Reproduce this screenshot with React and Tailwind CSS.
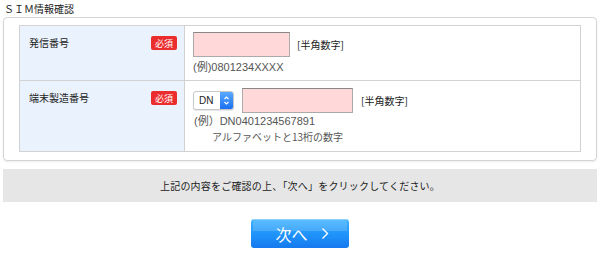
import React from 'react';

const jp = { fontFamily: '"Noto Sans CJK JP", "Noto Sans", sans-serif' };
const mixed = { fontFamily: '"Liberation Sans", "Noto Sans CJK JP", sans-serif' };

function Badge() {
    return (
        <span className="inline-flex h-[14px] w-[26px] items-center justify-center rounded-[2px] bg-[#ec2d2d] text-[9px] leading-none text-white">
            必須
        </span>
    );
}

function SelectBox() {
    return (
        <div className="flex h-[19px] w-[41px] items-center justify-between rounded-[3px] border border-[#c8c8c8] bg-white pl-[5px] shadow-[0_1px_1px_rgba(0,0,0,0.1)]">
            <span className="text-[10px] leading-none text-[#222]" style={{ fontFamily: '"Liberation Sans", sans-serif' }}>DN</span>
            <span className="flex h-[17px] w-[13px] items-center justify-center rounded-r-[2px] bg-gradient-to-b from-[#5aa9ff] to-[#1b6ff0]">
                <svg width="7" height="11" viewBox="0 0 7 11" fill="none" stroke="white" strokeWidth="1.2">
                    <path d="M1.5 4 L3.5 2 L5.5 4" />
                    <path d="M1.5 7 L3.5 9 L5.5 7" />
                </svg>
            </span>
        </div>
    );
}

export default function App() {
    return (
        <div className="w-[600px] h-[253px] bg-white text-[#333]" style={jp}>
            <div className="pl-[4px] pt-[2px] h-[17px] text-[10px] leading-[14px] text-[#222]">ＳＩＭ情報確認</div>

            <div className="mx-[3px] rounded-[4px] border border-[#d4d4d4] shadow-[0_1px_2px_rgba(0,0,0,0.08)] px-[15px] pt-[7px] pb-[8px]">
                <div className="border border-[#d2d2d2]">
                    <div className="flex h-[55px] border-b border-[#d2d2d2]">
                        <div className="flex w-[165px] justify-between border-r border-[#d2d2d2] bg-[#eaf2fd] pl-[9px] pr-[7px] pt-[10px]">
                            <span className="text-[10px] leading-[14px] text-[#222]">発信番号</span>
                            <Badge />
                        </div>
                        <div className="flex-1 pl-[8px] pt-[6px]">
                            <div className="flex items-center gap-[7px]">
                                <div className="h-[25px] w-[97px] border border-[#aaa] border-t-[#888] bg-[#ffd9d9]" />
                                <span className="text-[10px] text-[#222]">[半角数字]</span>
                            </div>
                            <div className="mt-[3px] text-[11px] leading-[14px] text-[#555]" style={mixed}>(例)0801234XXXX</div>
                        </div>
                    </div>
                    <div className="flex h-[70px]">
                        <div className="flex w-[165px] justify-between border-r border-[#d2d2d2] bg-[#eaf2fd] pl-[9px] pr-[7px] pt-[10px]">
                            <span className="text-[10px] leading-[14px] text-[#222]">端末製造番号</span>
                            <Badge />
                        </div>
                        <div className="flex-1 pl-[8px] pt-[7px]">
                            <div className="flex items-center">
                                <SelectBox />
                                <div className="ml-[8px] h-[25px] w-[111px] border border-[#aaa] border-t-[#888] bg-[#ffd9d9]" />
                                <span className="ml-[8px] text-[10px] text-[#222]">[半角数字]</span>
                            </div>
                            <div className="mt-[1px] pl-[1px] text-[11px] leading-[15px] text-[#555]" style={mixed}>(例）DN0401234567891</div>
                            <div className="pl-[19px] text-[10px] leading-[15px] text-[#555]">アルファベットと13桁の数字</div>
                        </div>
                    </div>
                </div>
            </div>

            <div className="mx-[3px] mt-[8px] flex h-[33px] items-center justify-center bg-[#e6e6e6] text-[10px] tracking-[0.2px] text-[#222]">
                上記の内容をご確認の上、「次へ」をクリックしてください。
            </div>

            <div className="flex justify-center pt-[17px]">
                <button className="relative flex h-[29px] w-[98px] items-center justify-center gap-[13px] overflow-hidden rounded-[3px] bg-gradient-to-b from-[#3fb3ff] via-[#2095fb] to-[#1779ee] pl-[4px] text-[16px] leading-none text-white shadow-[inset_0_1px_0_rgba(255,255,255,0.4)]">
                    <span className="absolute inset-x-[2px] top-[1px] h-[11px] rounded-t-[2px] bg-white/15" />
                    <span className="relative">次へ</span>
                    <svg className="relative" width="8" height="13" viewBox="0 0 8 13" fill="none" stroke="white" strokeWidth="1.4">
                        <path d="M1.5 1.5 L6.5 6.5 L1.5 11.5" />
                    </svg>
                </button>
            </div>
        </div>
    );
}
